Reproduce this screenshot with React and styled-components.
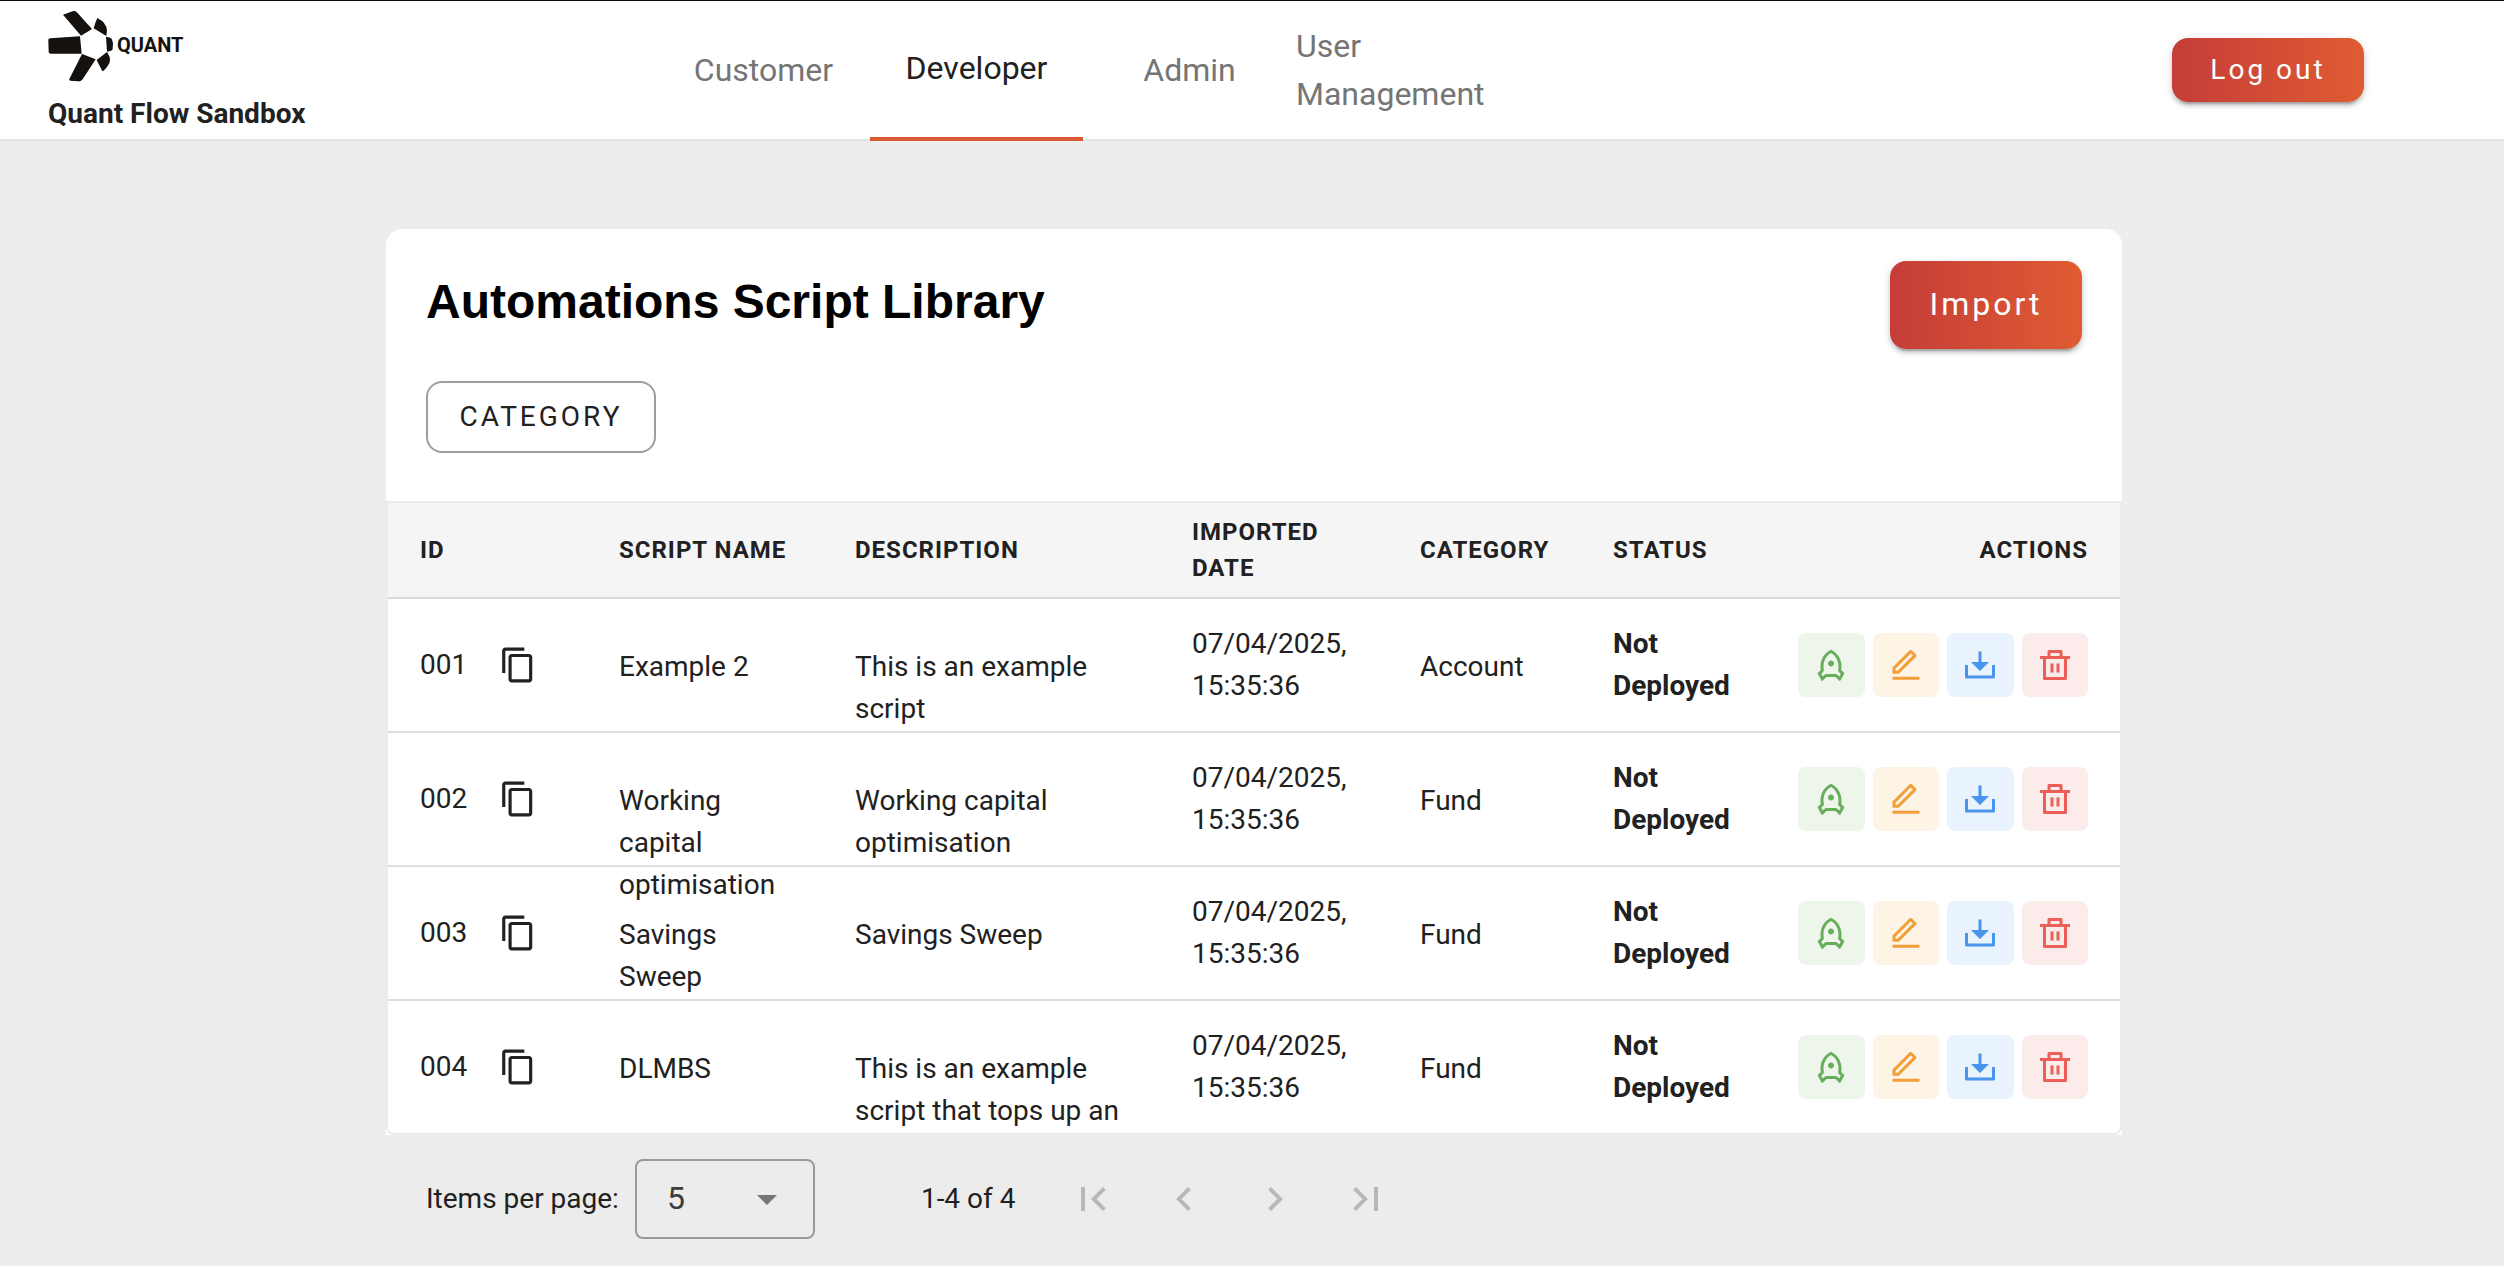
import React, { useState } from "react";
import styled, { createGlobalStyle, css } from "styled-components";
import {
  MdArrowDropDown,
  MdChevronLeft,
  MdChevronRight,
  MdContentCopy,
  MdFirstPage,
  MdLastPage,
} from "react-icons/md";
import {
  RiDeleteBinLine,
  RiDownload2Line,
  RiEditLine,
  RiRocketLine,
} from "react-icons/ri";

const GlobalStyle = createGlobalStyle`
  *, *::before, *::after { box-sizing: border-box; }
  body {
    margin: 0;
    background: #ededed;
    color: #212121;
    font-family: Roboto, "Liberation Sans", sans-serif;
    font-size: 28px;
    line-height: 42px;
    -webkit-font-smoothing: antialiased;
  }
  button, select { font-family: inherit; color: inherit; cursor: pointer; }
`;

const Header = styled.header`
  display: grid;
  grid-template-columns: 657fr 852fr 995fr;
  min-height: 141px;
  border-top: 1px solid #0a0a0a;
  border-bottom: 2px solid #e3e3e3;
  background: #fff;
`;

const Brand = styled.div`
  display: flex;
  flex-direction: column;
  padding: 9px 0 0 48px;
`;

const BrandMark = styled.div`
  display: flex;
  align-items: center;
  gap: 3px;
  height: 72px;
  color: #14110f;
`;

const BrandMarkText = styled.span`
  padding-bottom: 3px;
  font-size: 20px;
  font-weight: 700;
  line-height: 24px;
`;

const BrandName = styled.span`
  padding-top: 12px;
  font-weight: 700;
  line-height: 40px;
`;

const Nav = styled.nav`
  display: grid;
  grid-template-columns: repeat(4, 1fr);
`;

const Tab = styled.button`
  display: flex;
  align-items: center;
  justify-content: center;
  padding: 0;
  border: 0;
  background: none;
  color: #757575;
  font-size: 32px;
  line-height: 48px;
  text-align: left;
  ${(p) =>
    p.$active &&
    css`
      margin-bottom: -2px;
      padding-bottom: 2px;
      border-bottom: 4px solid #da5832;
      color: #212121;
    `}
`;

const HeaderEnd = styled.div`
  display: flex;
  align-items: center;
  justify-content: flex-end;
  padding-right: 140px;
`;

const PrimaryButton = styled.button`
  width: 192px;
  height: ${(p) => (p.$large ? 88 : 64)}px;
  padding: 0 0 2px;
  border: 0;
  border-radius: 16px;
  background: linear-gradient(90deg, #c53d38, #df5c32);
  box-shadow: 0 6px 2px -4px rgba(0, 0, 0, 0.2), 0 4px 4px rgba(0, 0, 0, 0.14),
    0 2px 10px rgba(0, 0, 0, 0.12);
  color: #fff;
  font-size: ${(p) => (p.$large ? 32 : 28)}px;
  font-weight: 400;
  letter-spacing: 3px;
`;

const Main = styled.main`
  width: 100%;
  max-width: 1740px;
  margin: 0 auto;
  padding: 88px 0 6px 4px;
`;

const Card = styled.section`
  border-radius: 16px 16px 0 0;
  background: #fff;
`;

const CardHead = styled.div`
  display: flex;
  flex-direction: column;
  align-items: flex-start;
  gap: 32px;
  padding: 32px 40px 48px;
`;

const TitleRow = styled.div`
  display: flex;
  align-items: flex-start;
  justify-content: space-between;
  width: 100%;
`;

const Title = styled.h1`
  margin: 0;
  color: #000;
  font-family: "Liberation Sans", Helvetica, Arial, sans-serif;
  font-size: 48px;
  font-weight: 700;
  line-height: 82px;
`;

const FilterButton = styled.button`
  width: 230px;
  height: 72px;
  padding: 0 0 2px;
  border: 2px solid #9e9e9e;
  border-radius: 16px;
  background: #fff;
  font-size: 28px;
  font-weight: 400;
  letter-spacing: 3px;
`;

const TableFrame = styled.div`
  overflow: hidden;
  border: 2px solid #ebebeb;
  border-radius: 0 0 8px 8px;
`;

const Table = styled.table`
  width: 100%;
  table-layout: fixed;
  border-spacing: 0;
`;

const Col = styled.col`
  width: ${(p) => p.$w}px;
`;

const HeadCell = styled.th`
  height: 96px;
  padding: 0 32px;
  border-bottom: 2px solid #d9d9d9;
  background: #f5f5f5;
  font-size: 24px;
  font-weight: 700;
  line-height: 36px;
  letter-spacing: 1px;
  text-align: ${(p) => (p.$end ? "right" : "left")};
`;

const Row = styled.tr`
  height: 134px;
  &:last-child {
    height: 132px;
  }
  &:last-child > td {
    border-bottom: 0;
  }
`;

const Cell = styled.td`
  padding: 0 32px;
  border-bottom: 2px solid #dedede;
  font-weight: ${(p) => (p.$strong ? 700 : 400)};
  vertical-align: middle;
`;

const CellText = styled.div`
  height: 42px;
  padding-top: 2px;
`;

const IdGroup = styled.div`
  display: flex;
  align-items: center;
  gap: 32px;
`;

const IconButton = styled.button`
  display: flex;
  align-items: center;
  justify-content: center;
  padding: 0;
  border: 0;
  background: none;
`;

const Actions = styled.div`
  display: grid;
  grid-template-columns: repeat(4, 1fr);
  gap: 8px;
`;

const ActionButton = styled(IconButton)`
  height: 64px;
  border-radius: 8px;
  background: ${(p) => p.$bg};
  color: ${(p) => p.$fg};
`;

const Footer = styled.footer`
  display: flex;
  align-items: center;
  min-height: 125px;
  padding-left: 40px;
  border-top: 2px solid #efefef;
  border-radius: 0 0 16px 16px;
  background: #ececec;
`;

const SelectBox = styled.div`
  position: relative;
  margin: 0 106px 0 16px;
  color: #757575;

  svg {
    position: absolute;
    top: 16px;
    right: 24px;
    pointer-events: none;
  }
`;

const Select = styled.select`
  display: block;
  width: 180px;
  height: 80px;
  padding: 0 30px 2px;
  border: 2px solid #9a9a9a;
  border-radius: 8px;
  appearance: none;
  background: none;
  color: #3c3c3c;
  font-size: 32px;
`;

const Pager = styled.div`
  display: flex;
  margin-left: 32px;
`;

const PagerButton = styled(IconButton)`
  width: 91px;
  height: 80px;
  color: #b8b8b8;
`;

const tabs = ["Customer", "Developer", "Admin", "User Management"];

const columns = [
  { label: "ID", width: 199 },
  { label: "SCRIPT NAME", width: 236 },
  { label: "DESCRIPTION", width: 337 },
  { label: "IMPORTED DATE", width: 228 },
  { label: "CATEGORY", width: 193 },
  { label: "STATUS", width: 185 },
  { label: "ACTIONS", width: 354, end: true },
];

const scripts = [
  { id: "001", name: "Example 2", description: "This is an example script", category: "Account" },
  { id: "002", name: "Working capital optimisation", description: "Working capital optimisation", category: "Fund" },
  { id: "003", name: "Savings Sweep", description: "Savings Sweep", category: "Fund" },
  { id: "004", name: "DLMBS", description: "This is an example script that tops up an", category: "Fund" },
];

const actions = [
  { label: "Deploy", Icon: RiRocketLine, bg: "#eef6ec", fg: "#67ad5b" },
  { label: "Edit", Icon: RiEditLine, bg: "#fdf4e5", fg: "#f29f39" },
  { label: "Download", Icon: RiDownload2Line, bg: "#e8f3fd", fg: "#4994ec" },
  { label: "Delete", Icon: RiDeleteBinLine, bg: "#fbeceb", fg: "#ec5f59" },
];

const pagerButtons = [
  { label: "First page", Icon: MdFirstPage },
  { label: "Previous page", Icon: MdChevronLeft },
  { label: "Next page", Icon: MdChevronRight },
  { label: "Last page", Icon: MdLastPage },
];

function Logo() {
  return (
    <svg width="66" height="72" viewBox="0 0 198 216" fill="currentColor" aria-hidden="true">
      <path d="M45 14 L76 3 Q84 2 88 8 L132 57 L99 77 Z" />
      <path d="M1 90 Q1 86 6 85 L96 79 L101 131 L8 131 Q3 131 2 126 Z" />
      <path d="M102 132 L143 148 L104 208 Q99 215 91 214 L67 212 Q62 211 64 207 Z" />
      <path d="M148 24 Q176 38 177 62 L175 78 L137 55 Q142 37 148 24 Z" />
      <path d="M174 80 L187 83 Q191 84 192 89 L195 100 L194 116 Q194 121 189 122 L177 125 Z" />
      <path d="M177 126 Q187 142 186 150 L184 160 Q177 174 167 182 Q163 184 161 180 L146 150 Z" />
    </svg>
  );
}

export default function App() {
  const [activeTab, setActiveTab] = useState("Developer");
  const [pageSize, setPageSize] = useState("5");

  return (
    <>
      <GlobalStyle />
      <Header>
        <Brand>
          <BrandMark>
            <Logo />
            <BrandMarkText>QUANT</BrandMarkText>
          </BrandMark>
          <BrandName>Quant Flow Sandbox</BrandName>
        </Brand>
        <Nav>
          {tabs.map((tab) => (
            <Tab key={tab} type="button" $active={tab === activeTab} onClick={() => setActiveTab(tab)}>
              {tab}
            </Tab>
          ))}
        </Nav>
        <HeaderEnd>
          <PrimaryButton type="button">Log out</PrimaryButton>
        </HeaderEnd>
      </Header>

      <Main>
        <Card>
          <CardHead>
            <TitleRow>
              <Title>Automations Script Library</Title>
              <PrimaryButton type="button" $large>
                Import
              </PrimaryButton>
            </TitleRow>
            <FilterButton type="button">CATEGORY</FilterButton>
          </CardHead>
          <TableFrame>
            <Table>
              <colgroup>
                {columns.map((c) => (
                  <Col key={c.label} $w={c.width} />
                ))}
              </colgroup>
              <thead>
                <tr>
                  {columns.map((c) => (
                    <HeadCell key={c.label} scope="col" $end={c.end}>
                      {c.label}
                    </HeadCell>
                  ))}
                </tr>
              </thead>
              <tbody>
                {scripts.map((s) => (
                  <Row key={s.id}>
                    <Cell>
                      <IdGroup>
                        {s.id}
                        <IconButton type="button" aria-label="Copy ID">
                          <MdContentCopy size={38} />
                        </IconButton>
                      </IdGroup>
                    </Cell>
                    <Cell>
                      <CellText>{s.name}</CellText>
                    </Cell>
                    <Cell>
                      <CellText>{s.description}</CellText>
                    </Cell>
                    <Cell>07/04/2025, 15:35:36</Cell>
                    <Cell>
                      <CellText>{s.category}</CellText>
                    </Cell>
                    <Cell $strong>Not Deployed</Cell>
                    <Cell>
                      <Actions>
                        {actions.map(({ label, Icon, bg, fg }) => (
                          <ActionButton key={label} type="button" aria-label={label} $bg={bg} $fg={fg}>
                            <Icon size={36} />
                          </ActionButton>
                        ))}
                      </Actions>
                    </Cell>
                  </Row>
                ))}
              </tbody>
            </Table>
          </TableFrame>
        </Card>
        <Footer>
          <label htmlFor="page-size">Items per page:</label>
          <SelectBox>
            <Select id="page-size" value={pageSize} onChange={(e) => setPageSize(e.target.value)}>
              <option>5</option>
              <option>10</option>
              <option>25</option>
            </Select>
            <MdArrowDropDown size={48} />
          </SelectBox>
          <span>1-4 of 4</span>
          <Pager>
            {pagerButtons.map(({ label, Icon }) => (
              <PagerButton key={label} type="button" aria-label={label}>
                <Icon size={48} />
              </PagerButton>
            ))}
          </Pager>
        </Footer>
      </Main>
    </>
  );
}
